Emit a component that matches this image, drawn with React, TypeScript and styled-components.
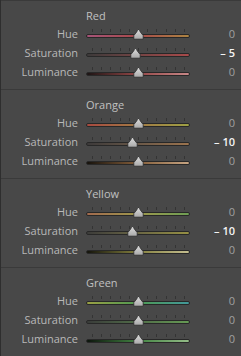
import React from "react";
import styled, { createGlobalStyle } from "styled-components";

const GlobalStyle = createGlobalStyle`
  html, body {
    margin: 0;
    padding: 0;
    background: #484848;
  }
`;

const Panel = styled.div`
  width: 241px;
  height: 356px;
  overflow: hidden;
  background: #484848;
  border-left: 1px solid #2e2e2e;
  box-sizing: border-box;
  font-family: "Open Sans", "DejaVu Sans", sans-serif;
  font-size: 11px;
`;

const Section = styled.section`
  border-top: 1px solid #3a3a3a;
  padding: 6px 0 8px;
`;

const Title = styled.div`
  height: 17px;
  line-height: 17px;
  padding-left: 85px;
  color: #c0c0c0;
`;

const Row = styled.div`
  display: grid;
  grid-template-columns: 77px 104px 37px;
  column-gap: 8px;
  align-items: center;
  height: 19px;
`;

const Label = styled.span`
  text-align: right;
  color: #b8b8b8;
  line-height: 19px;
`;

const Value = styled.span<{ $active: boolean }>`
  text-align: right;
  line-height: 19px;
  color: ${(p) => (p.$active ? "#f4f4f4" : "#a0a0a0")};
  font-weight: ${(p) => (p.$active ? 600 : 400)};
`;

const Slider = styled.div`
  position: relative;
  height: 19px;
`;

const Ticks = styled.div`
  position: absolute;
  top: 5px;
  left: 6px;
  right: 5px;
  height: 3px;
  display: flex;
  justify-content: space-between;
`;

const Tick = styled.i`
  display: block;
  width: 1px;
  height: 3px;
  background: #343434;
`;

const Track = styled.div<{ $from: string; $mid: string; $to: string }>`
  position: absolute;
  top: 10px;
  left: 0;
  right: 0;
  height: 2px;
  border: 1px solid #282828;
  border-radius: 3px;
  background: linear-gradient(
    to right,
    ${(p) => p.$from},
    ${(p) => p.$mid},
    ${(p) => p.$to}
  );
`;

const Thumb = styled.svg`
  position: absolute;
  top: 5px;
  width: 11px;
  height: 11px;
  margin-left: -5.5px;
`;

type Gradient = [string, string, string];

interface RowData {
  label: string;
  value: number;
  colors: Gradient;
}

interface SectionData {
  title: string;
  rows: RowData[];
}

const sections: SectionData[] = [
  {
    title: "Red",
    rows: [
      { label: "Hue", value: 0, colors: ["#a65478", "#a84a4a", "#ac8442"] },
      { label: "Saturation", value: -5, colors: ["#3c3a3a", "#744444", "#a84a4a"] },
      { label: "Luminance", value: 0, colors: ["#1c1414", "#964848", "#c88888"] },
    ],
  },
  {
    title: "Orange",
    rows: [
      { label: "Hue", value: 0, colors: ["#a84a40", "#a27a44", "#9ea044"] },
      { label: "Saturation", value: -10, colors: ["#3c3a3a", "#6a5848", "#9c744e"] },
      { label: "Luminance", value: 0, colors: ["#16120c", "#845e3a", "#c6a482"] },
    ],
  },
  {
    title: "Yellow",
    rows: [
      { label: "Hue", value: 0, colors: ["#a26a4e", "#9e984c", "#6e9e54"] },
      { label: "Saturation", value: -10, colors: ["#3c3c3a", "#6a6644", "#969044"] },
      { label: "Luminance", value: 0, colors: ["#14140c", "#84803e", "#c4be90"] },
    ],
  },
  {
    title: "Green",
    rows: [
      { label: "Hue", value: 0, colors: ["#9aa044", "#4e9a52", "#42989a"] },
      { label: "Saturation", value: 0, colors: ["#3a3c3a", "#506c48", "#669a54"] },
      { label: "Luminance", value: 0, colors: ["#0c140c", "#428442", "#94bc88"] },
    ],
  },
];

const formatValue = (v: number) => (v < 0 ? `\u2013 ${-v}` : `${v}`);

const SliderThumb: React.FC<{ value: number }> = ({ value }) => {
  // track is 104px wide, range -100..100
  const x = 52 + value * 0.52;
  return (
    <Thumb viewBox="0 0 11 11" style={{ left: x }}>
      <defs>
        <linearGradient id="thumbFill" x1="0" y1="0" x2="0" y2="1">
          <stop offset="0" stopColor="#dcdcdc" />
          <stop offset="1" stopColor="#a8a8a8" />
        </linearGradient>
      </defs>
      <path
        d="M5.5 0.6 C6.2 0.6 6.6 1.5 7.2 2.8 L10.2 6.6 L10.2 10.2 L0.8 10.2 L0.8 6.6 L3.8 2.8 C4.4 1.5 4.8 0.6 5.5 0.6 Z"
        fill="url(#thumbFill)"
        stroke="#2a2a2a"
        strokeWidth="0.8"
        strokeLinejoin="round"
      />
    </Thumb>
  );
};

const AdjustRow: React.FC<RowData> = ({ label, value, colors }) => (
  <Row>
    <Label>{label}</Label>
    <Slider>
      <Ticks>
        {Array.from({ length: 11 }, (_, i) => (
          <Tick key={i} />
        ))}
      </Ticks>
      <Track $from={colors[0]} $mid={colors[1]} $to={colors[2]} />
      <SliderThumb value={value} />
    </Slider>
    <Value $active={value !== 0}>{formatValue(value)}</Value>
  </Row>
);

export default function App() {
  return (
    <>
      <GlobalStyle />
      <Panel>
        {sections.map((s) => (
          <Section key={s.title}>
            <Title>{s.title}</Title>
            {s.rows.map((r) => (
              <AdjustRow key={r.label} {...r} />
            ))}
          </Section>
        ))}
      </Panel>
    </>
  );
}
